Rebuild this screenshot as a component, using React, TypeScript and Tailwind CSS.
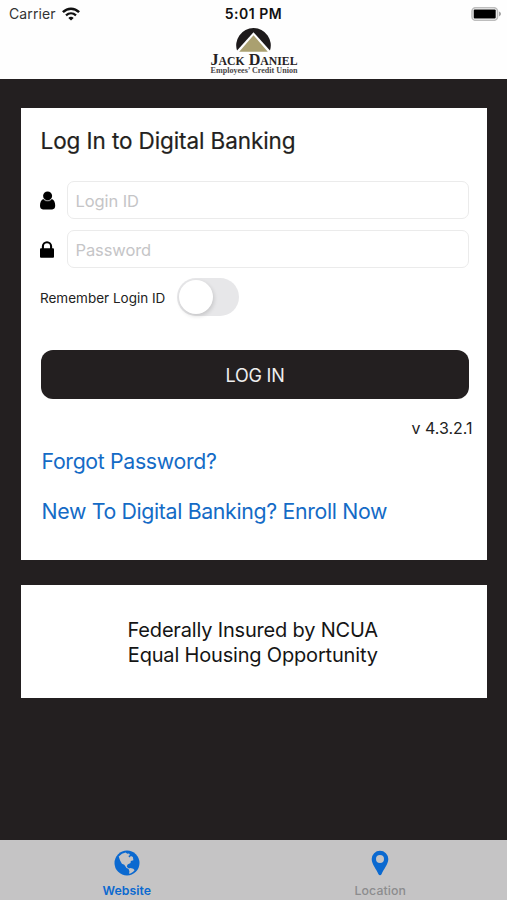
import type { ReactNode } from 'react';

function WifiIcon() {
  return (
    <svg width="18" height="14" viewBox="0 0 18 14" fill="none" stroke="#111">
      <path d="M.9 5.1C5.600.5 12.400.5 17.100 5.100" strokeWidth="2.500" />
      <path d="M4 8.400c3-2.800 7-2.800 10 0" strokeWidth="2.200" />
      <path d="M9 13.600 6.300 10.900c1.600-1.400 3.800-1.400 5.400 0z" fill="#111" stroke="none" />
    </svg>
  );
}

function BatteryIcon() {
  return (
    <svg width="31" height="14" viewBox="0 0 31 14">
      <rect x="1" y=".7" width="25.500" height="12.600" rx="3.600" fill="#fff" stroke="#bdbdbd" strokeWidth="1.600" />
      <rect x="2.700" y="2.400" width="22" height="9.200" rx="1" fill="#000" />
      <path d="M28 4.600c2.700.9 2.700 3.900 0 4.800z" fill="#a5a5a5" />
    </svg>
  );
}

function Logo() {
  return (
    <svg width="92" height="48" viewBox="0 0 92 48" className="block">
      <path d="M29.200 24.200A17.300 17.300 0 1 1 61.800 24.200z" fill="#1d1a1b" />
      <path d="M45.500 5.200 63.500 25.200H27.500z" fill="#fefefe" />
      <path d="M45.500 8.200 59.800 24.700H31.200z" fill="#aaa070" />
      <text
        x="2.500"
        y="37.500"
        textLength="87"
        lengthAdjust="spacingAndGlyphs"
        fontFamily="Liberation Serif, serif"
        fontSize="16.500"
        fontWeight="700"
        fill="#262223"
        className="[font-variant-caps:small-caps]"
      >
        Jack Daniel
      </text>
      <text
        x="2.500"
        y="46"
        textLength="87"
        lengthAdjust="spacingAndGlyphs"
        fontFamily="Liberation Serif, serif"
        fontWeight="700"
        fontSize="7.600"
        fill="#4a4647"
      >
        Employees’ Credit Union
      </text>
    </svg>
  );
}

function UserIcon() {
  return (
    <svg width="16" height="19" viewBox="0 0 16 19">
      <circle cx="7.600" cy="4.900" r="4.500" />
      <path d="M3.300 7.900C1 8.700 0 11.200 0 14.800c0 2.300 1.200 3.600 3 3.600h9.200c1.800 0 3-1.300 3-3.600 0-3.600-1-6.100-3.300-6.900a5.500 5.500 0 0 1-8.600 0z" />
      <path d="M3.500 8.300a5.400 5.400 0 0 0 8.200 0" fill="none" stroke="#777" strokeWidth=".6" />
    </svg>
  );
}

function LockIcon() {
  return (
    <svg width="14" height="17" viewBox="0 0 14 17">
      <path d="M2.900 8V5.300a4.100 4.100 0 0 1 8.200 0V8" fill="none" stroke="#000" strokeWidth="2.100" />
      <rect x="0" y="7.300" width="14" height="9.500" rx="1" />
    </svg>
  );
}

function GlobeIcon() {
  return (
    <svg width="26" height="26" viewBox="0 0 26 26">
      <circle cx="13" cy="13" r="12.500" fill="#0b69d0" />
      <path
        d="M4.700 6.500 8 3.700l3.600-1.200 1.700 1.300 1.700-.4 1 1.700-1.600 1 .9 1.300 1.700-1.300 1.900.9.500 3.200-2.600.7-.3 2-2.900 1.600-.8 2.100 1.200 1.500 1.400.2-.4.700-2.500-1.100-2.200-3.100-2.400-1-1.800-3.300z"
        fill="#c5c4c5"
      />
      <path d="m14.500 18.700 2-.6 2.800.6 1.300 1.500-1.700 1.900-2.600 1.500-1.200.1.300-2.500z" fill="#c5c4c5" />
    </svg>
  );
}

function PinIcon() {
  return (
    <svg width="18" height="26" viewBox="0 0 18 26">
      <path
        fillRule="evenodd"
        fill="#0b69d0"
        d="M9 .7a8.300 8.300 0 0 0-8.300 8.300c0 5.200 4.500 10 6.800 15.200.6 1.500 2.400 1.500 3 0C12.800 19 17.300 14.200 17.300 9A8.300 8.300 0 0 0 9 .7zM9 5.100a4 4 0 1 1 0 8 4 4 0 0 1 0-8z"
      />
    </svg>
  );
}

function Field({ icon, placeholder, type }: { icon: ReactNode; placeholder: string; type: string }) {
  return (
    <label className="flex items-center">
      <span className="w-[26.5px] shrink-0">{icon}</span>
      <input
        type={type}
        placeholder={placeholder}
        className="h-[38px] w-[402px] rounded-[7px] border border-[#ebebeb] bg-white px-[8px] pt-px text-[16.5px] tracking-[-0.1px] text-black placeholder:text-[#c5c5c7]"
      />
    </label>
  );
}

export default function App() {
  return (
    <div className="flex h-[900px] w-[507px] flex-col overflow-hidden bg-[#231f20] font-['Inter','Liberation_Sans',sans-serif]">
      <header className="h-[79px] shrink-0 bg-[#fefefe]">
        <div className="grid h-[27px] grid-cols-3 items-center">
          <div className="flex items-center gap-[6px] pl-[9px] text-[14px] text-[#333]">
            <span className="tracking-[0.1px]">Carrier</span>
            <WifiIcon />
          </div>
          <div className="text-center text-[14px] font-semibold tracking-[0.5px] text-[#111]">5:01 PM</div>
          <div className="flex justify-end pr-[5.5px]">
            <BatteryIcon />
          </div>
        </div>
        <div className="flex justify-center">
          <Logo />
        </div>
      </header>

      <main className="flex grow flex-col px-[20.5px] pt-[29px]">
        <section className="h-[452px] bg-white pt-[18px] pl-[19.5px]">
          <h1 className="h-[55px] pl-[0.6px] text-[22.5px] leading-[30px] tracking-[-0.1px] text-[#231f20] [-webkit-text-stroke:0.2px_#231f20]">
            Log In to Digital Banking
          </h1>
          <div className="flex flex-col gap-[11px]">
            <Field icon={<UserIcon />} placeholder="Login ID" type="text" />
            <Field icon={<LockIcon />} placeholder="Password" type="password" />
          </div>
          <div className="mt-[10px] flex h-[38px] items-center">
            <span className="w-[137px] pt-[2px] text-[13.5px] whitespace-nowrap text-[#222]">Remember Login ID</span>
            <button className="h-[38px] w-[62px] rounded-full bg-[#e7e7e9] p-[2px]" aria-label="Remember Login ID">
              <span className="block size-[34px] rounded-full bg-white shadow-[1px_2px_4px_rgba(0,0,0,0.15)]" />
            </button>
          </div>
          <button className="mt-[34px] ml-px block h-[49px] w-[428px] rounded-[12px] bg-[#231f20] pt-px text-[18px] tracking-[-0.2px] text-[#eee]">
            LOG IN
          </button>
          <p className="mt-[17px] pr-[14px] text-right text-[16px] leading-6 text-[#222]">v 4.3.2.1</p>
          <div className="mt-[6px] ml-px flex flex-col items-start gap-5 pl-[0.5px] text-[21.3px] leading-[30px] tracking-[-0.34px] text-[#146bc6]">
            <a>Forgot Password?</a>
            <a>New To Digital Banking? Enroll Now</a>
          </div>
        </section>
        <section className="mt-[25px] h-[113px] bg-white pt-[33px] pr-[1.5px] text-center text-[20px] leading-[24.5px] tracking-[-0.18px] text-[#151515]">
          <p>Federally Insured by NCUA</p>
          <p>Equal Housing Opportunity</p>
        </section>
      </main>

      <nav className="grid h-[60px] shrink-0 grid-cols-2 bg-[#c5c4c5] pt-[10px] text-[12.3px]">
        <div className="flex flex-col items-center gap-[6px] font-semibold text-[#0b69d0]">
          <GlobeIcon />
          <span className="leading-[18px]">Website</span>
        </div>
        <div className="flex flex-col items-center gap-[6px] font-medium text-[#8c8c8e]">
          <PinIcon />
          <span className="leading-[18px] tracking-[0.1px]">Location</span>
        </div>
      </nav>
    </div>
  );
}
